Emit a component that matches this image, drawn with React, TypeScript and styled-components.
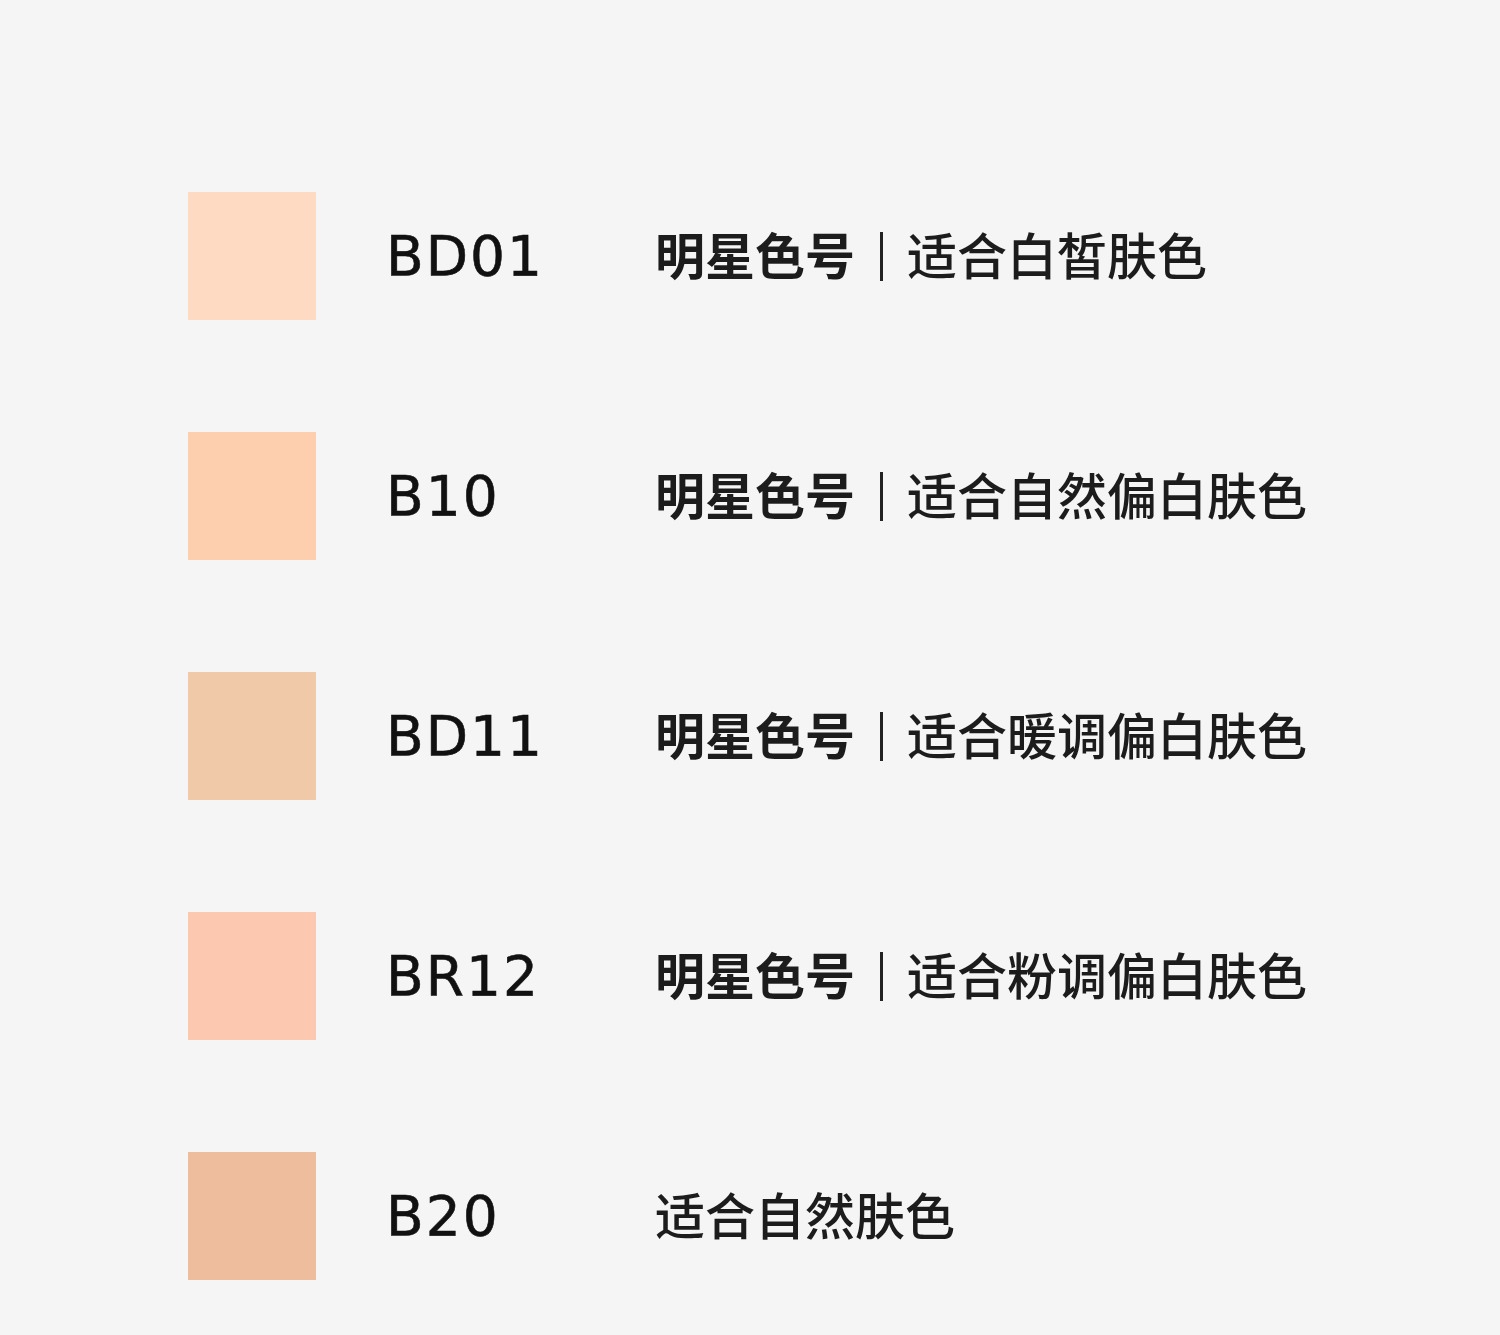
import React from 'react';
import styled, { createGlobalStyle } from 'styled-components';

type Shade = {
    code: string;
    color: string;
    star: boolean;
    desc: string;
};

const shades: Shade[] = [
    { code: 'BD01', color: '#fedac2', star: true, desc: '适合白皙肤色' },
    { code: 'B10', color: '#fecfae', star: true, desc: '适合自然偏白肤色' },
    { code: 'BD11', color: '#efc9a8', star: true, desc: '适合暖调偏白肤色' },
    { code: 'BR12', color: '#fcc8b0', star: true, desc: '适合粉调偏白肤色' },
    { code: 'B20', color: '#eebd9e', star: false, desc: '适合自然肤色' },
];

const GlobalStyle = createGlobalStyle`
    html, body {
        margin: 0;
        padding: 0;
        background: #f5f5f5;
    }
`;

const Page = styled.div`
    width: 1500px;
    height: 1335px;
    box-sizing: border-box;
    padding: 192px 0 0 188px;
    background: #f5f5f5;
    display: flex;
    flex-direction: column;
    gap: 112px;
`;

const Row = styled.div`
    display: flex;
    align-items: center;
    height: 128px;
`;

const Swatch = styled.div<{ $color: string }>`
    width: 128px;
    height: 128px;
    flex-shrink: 0;
    background: ${props => props.$color};
`;

const Code = styled.div`
    width: 269px;
    margin-left: 70px;
    font-family: "DejaVu Sans", sans-serif;
    font-size: 55px;
    letter-spacing: 2px;
    color: #111;
    line-height: 1;
    -webkit-text-stroke: 0.6px #111;
`;

// text sits a few px high in the reference, hence the bottom padding
const Desc = styled.div`
    display: flex;
    align-items: center;
    padding-bottom: 7px;
    font-family: "Noto Sans CJK SC", sans-serif;
    font-size: 50px;
    line-height: 1;
    color: #1c1c1c;
    font-weight: 500;
`;

const Star = styled.span`
    font-weight: 700;
`;

const Divider = styled.span`
    display: inline-block;
    width: 3px;
    height: 49px;
    margin: 7px 24px 0 25px;
    background: #222;
`;

const App: React.FC = () => (
    <>
        <GlobalStyle />
        <Page>
            {shades.map(shade => (
                <Row key={shade.code}>
                    <Swatch $color={shade.color} />
                    <Code>{shade.code}</Code>
                    <Desc>
                        {shade.star && (
                            <>
                                <Star>明星色号</Star>
                                <Divider />
                            </>
                        )}
                        <span>{shade.desc}</span>
                    </Desc>
                </Row>
            ))}
        </Page>
    </>
);

export default App;
